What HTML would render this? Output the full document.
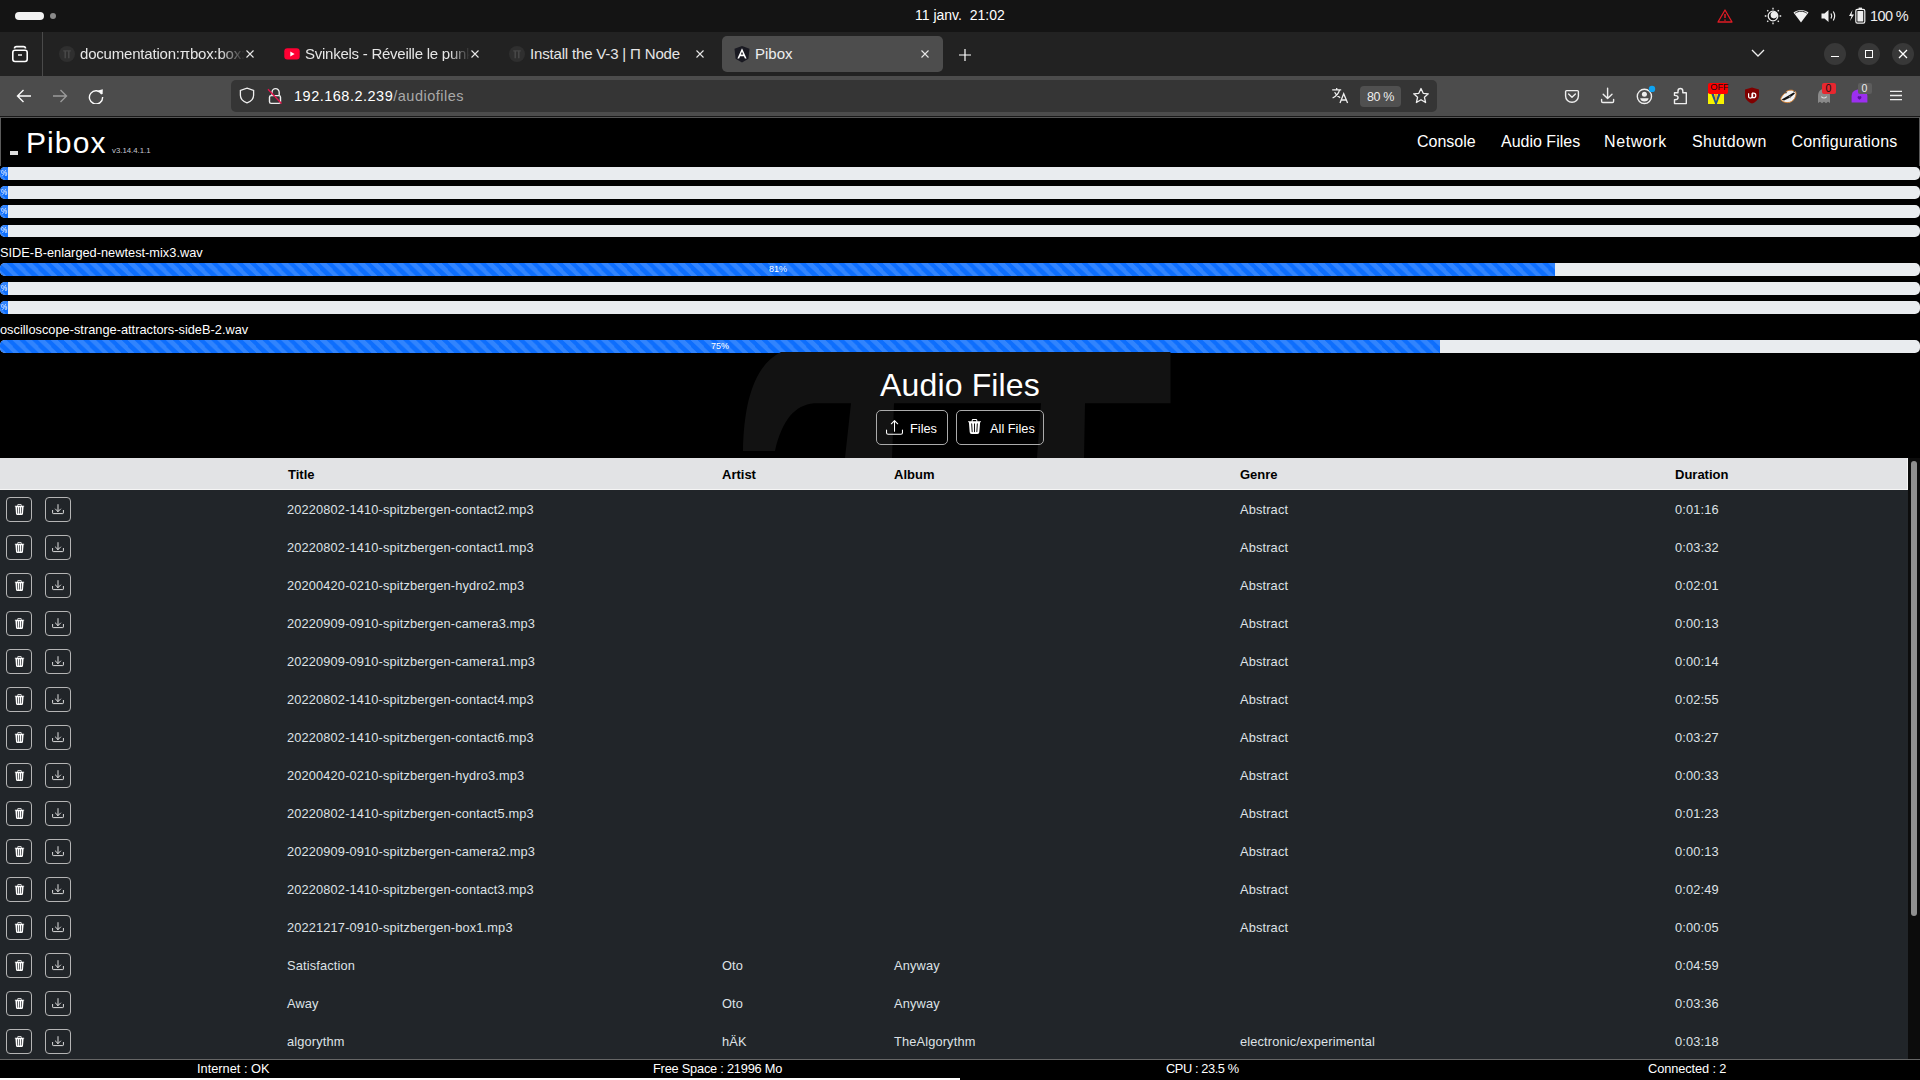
<!DOCTYPE html>
<html><head><meta charset="utf-8">
<style>
*{box-sizing:border-box}
html,body{margin:0;padding:0}
body{width:1920px;height:1080px;overflow:hidden;background:#000;position:relative;font-family:"Liberation Sans",sans-serif;color:#fff}
.a{position:absolute}
.t{position:absolute;white-space:nowrap;line-height:1}
svg{display:block}
/* progress */
.pg{position:absolute;left:0;width:1920px;height:12.8px;background:#e9ecef;border-radius:5px;overflow:hidden}
.pb{position:absolute;left:0;top:0;height:100%;background-color:#0d6efd;
 background-image:linear-gradient(45deg,rgba(255,255,255,.15) 25%,transparent 25%,transparent 50%,rgba(255,255,255,.15) 50%,rgba(255,255,255,.15) 75%,transparent 75%,transparent);
 background-size:12.8px 12.8px;overflow:hidden}
.pt{position:absolute;top:2px;font-size:9px;line-height:1;color:#fff;white-space:nowrap}
.lbl{position:absolute;left:0;font-size:12.8px;line-height:1;color:#fff;white-space:nowrap}
/* table */
.row{position:absolute;left:0;width:1908px;height:38px;background:#212529}
.btn{position:absolute;top:7px;width:26px;height:25px;border:1px solid #b5b5b5;border-radius:4px}
.cell{position:absolute;top:14px;letter-spacing:0.15px;font-size:12.8px;line-height:1;color:#dee2e6;white-space:nowrap}
.hd{position:absolute;top:10px;font-size:13px;font-weight:bold;line-height:1;color:#000;white-space:nowrap}
.ft{position:absolute;top:1062.5px;font-size:12.8px;line-height:1;color:#fff;white-space:nowrap}
</style></head>
<body>
<!-- OS top bar -->
<div class="a" style="left:0;top:0;width:1920px;height:32px;background:#141414"></div>
<div class="a" style="left:15px;top:12px;width:29px;height:8px;border-radius:4px;background:#f2f2f2"></div>
<div class="a" style="left:50px;top:13px;width:6px;height:6px;border-radius:50%;background:#8a8a8a"></div>
<div class="t" style="left:915px;top:8px;font-size:14px">11 janv.&nbsp;&nbsp;21:02</div>

<!-- tab bar -->
<div class="a" style="left:0;top:32px;width:1920px;height:44px;background:#222"></div>

<!-- toolbar -->
<div class="a" style="left:0;top:76px;width:1920px;height:40px;background:#4c4c4c"></div>
<div class="a" style="left:0;top:116px;width:1920px;height:1px;background:#181818"></div>
<div class="a" style="left:0;top:117px;width:1920px;height:1px;background:#555"></div>
<div class="a" style="left:231px;top:80px;width:1206px;height:32px;border-radius:5px;background:#353535"></div>


<!-- tab strip -->
<div class="a" style="left:42px;top:32px;width:1px;height:44px;background:#4a4a4a"></div>
<svg class="a" style="left:0;top:32px" width="42" height="44" viewBox="0 32 42 44" fill="none" stroke="#fff" stroke-width="1.6">
 <rect x="12.8" y="50.3" width="14.4" height="11.2" rx="2.2"/>
 <path d="M14.5 48.5 Q14.5 46.6 16.5 46.6 L23.5 46.6 Q25.5 46.6 25.5 48.5"/>
 <path d="M18 55 L22 55" stroke-width="1.4"/>
</svg>
<!-- tab 1 -->
<svg class="a" style="left:59px;top:46px" width="16" height="16" viewBox="0 0 16 16"><circle cx="8" cy="8" r="8" fill="#2f2f2f"/><path d="M4.2 4.2H11.8V5.6H4.2ZM5.4 4.2H7V12.2H5.4ZM9 4.2H10.6V12.2H9Z" fill="#474747"/></svg>
<div class="t" style="left:80px;top:46px;font-size:15px;color:#e6e6e6;letter-spacing:-0.2px;width:165px;overflow:hidden;-webkit-mask-image:linear-gradient(90deg,#000 140px,transparent 165px)">documentation:&#960;box:box:</div>
<svg class="a" style="left:245px;top:49px" width="10" height="10" viewBox="0 0 10 10" stroke="#e8e8e8" stroke-width="1.1"><path d="M1.5 1.5L8.5 8.5M8.5 1.5L1.5 8.5"/></svg>
<!-- tab 2 -->
<svg class="a" style="left:284px;top:48px" width="16" height="12" viewBox="0 0 16 12"><rect x="0.3" y="0.3" width="15.4" height="11.2" rx="3" fill="#ff0033"/><path d="M6.3 3.4L10.6 5.9L6.3 8.4Z" fill="#fff"/></svg>
<div class="t" style="left:305px;top:46px;font-size:15px;color:#e6e6e6;letter-spacing:-0.25px;width:165px;overflow:hidden;-webkit-mask-image:linear-gradient(90deg,#000 145px,transparent 165px)">Svinkels - R&eacute;veille le punk</div>
<svg class="a" style="left:470px;top:49px" width="10" height="10" viewBox="0 0 10 10" stroke="#e8e8e8" stroke-width="1.1"><path d="M1.5 1.5L8.5 8.5M8.5 1.5L1.5 8.5"/></svg>
<!-- tab 3 -->
<svg class="a" style="left:509px;top:46px" width="16" height="16" viewBox="0 0 16 16"><circle cx="8" cy="8" r="8" fill="#2f2f2f"/><path d="M4.2 4.2H11.8V5.6H4.2ZM5.4 4.2H7V12.2H5.4ZM9 4.2H10.6V12.2H9Z" fill="#474747"/></svg>
<div class="t" style="left:530px;top:46px;font-size:15px;color:#e6e6e6;letter-spacing:-0.17px">Install the V-3 | &#928; Node</div>
<svg class="a" style="left:695px;top:49px" width="10" height="10" viewBox="0 0 10 10" stroke="#e8e8e8" stroke-width="1.1"><path d="M1.5 1.5L8.5 8.5M8.5 1.5L1.5 8.5"/></svg>
<!-- tab 4 active -->
<div class="a" style="left:722px;top:36px;width:221px;height:36px;border-radius:5px;background:#4d4d4d"></div>
<svg class="a" style="left:734px;top:46px" width="16" height="17" viewBox="0 0 16 17"><path d="M8 0L15.5 2.7L14.4 12.8L8 16.5L1.6 12.8L0.5 2.7Z" fill="#1a1a22"/><path d="M8 2.2L3.4 12.6H5.1L6.1 10.2H9.9L10.9 12.6H12.6ZM6.8 8.6L8 5.7L9.2 8.6Z" fill="#fff"/></svg>
<div class="t" style="left:755px;top:46px;font-size:15px;color:#eee">Pibox</div>
<svg class="a" style="left:920px;top:49px" width="10" height="10" viewBox="0 0 10 10" stroke="#e8e8e8" stroke-width="1.1"><path d="M1.5 1.5L8.5 8.5M8.5 1.5L1.5 8.5"/></svg>
<svg class="a" style="left:958px;top:48px" width="14" height="14" viewBox="0 0 14 14" stroke="#fff" stroke-width="1.2"><path d="M7 1V13M1 7H13"/></svg>
<!-- window controls -->
<svg class="a" style="left:1751px;top:48px" width="14" height="10" viewBox="0 0 14 10" fill="none" stroke="#eee" stroke-width="1.3"><path d="M1 2L7 8L13 2"/></svg>
<div class="a" style="left:1824px;top:43px;width:22px;height:22px;border-radius:50%;background:#383838"></div>
<div class="a" style="left:1858px;top:43px;width:22px;height:22px;border-radius:50%;background:#383838"></div>
<div class="a" style="left:1892px;top:43px;width:22px;height:22px;border-radius:50%;background:#383838"></div>
<div class="a" style="left:1831px;top:56px;width:8px;height:1.2px;background:#fff"></div>
<div class="a" style="left:1865px;top:50px;width:8px;height:8px;border:1.3px solid #fff"></div>
<svg class="a" style="left:1898px;top:49px" width="10" height="10" viewBox="0 0 10 10" stroke="#fff" stroke-width="1.3"><path d="M1 1L9 9M9 1L1 9"/></svg>

<!-- toolbar icons -->
<svg class="a" style="left:16px;top:89px" width="16" height="14" viewBox="0 0 16 14" fill="none" stroke="#fbfbfb" stroke-width="1.4"><path d="M15 7H1.5M7.5 1L1.5 7L7.5 13"/></svg>
<svg class="a" style="left:52px;top:89px" width="16" height="14" viewBox="0 0 16 14" fill="none" stroke="#9a9a9a" stroke-width="1.4"><path d="M1 7H14.5M8.5 1L14.5 7L8.5 13"/></svg>
<svg class="a" style="left:88px;top:88px" width="16" height="16" viewBox="0 0 16 16" fill="none" stroke="#fbfbfb" stroke-width="1.4"><path d="M13.8 6.2A6.6 6.6 0 1 0 14.6 9"/><path d="M10 2.5L14.8 1.2L14.6 6.3Z" fill="#fbfbfb" stroke="none"/></svg>
<!-- url bar content -->
<svg class="a" style="left:239px;top:87px" width="16" height="17" viewBox="0 0 16 17" fill="none" stroke="#eee" stroke-width="1.3"><path d="M8 1.2L14.6 3.4V8.2C14.6 12 11.5 14.6 8 15.9C4.5 14.6 1.4 12 1.4 8.2V3.4Z"/></svg>
<svg class="a" style="left:267px;top:87px" width="17" height="18" viewBox="0 0 17 18" fill="none"><path d="M5 8V5.2A3.6 3.6 0 0 1 12.2 5.2V8" stroke="#eee" stroke-width="1.4"/><rect x="2.5" y="8.6" width="11" height="7.8" rx="1.6" stroke="#eee" stroke-width="1.4"/><path d="M1 2.2L14.5 16.6" stroke="#e3124b" stroke-width="1.4"/></svg>
<div class="t" style="left:294px;top:89px;font-size:14.5px;color:#fff;letter-spacing:0.5px">192.168.2.239<span style="color:#a9a9a9">/audiofiles</span></div>
<svg class="a" style="left:1331px;top:87px" width="18" height="17" viewBox="0 0 18 17" fill="none" stroke="#eee" stroke-width="1.3"><path d="M1.2 2.8H10.2M5.7 1V2.8M8.6 2.8C7.6 6.5 5 9.2 1.6 11M3.6 5.2C5 8 7 9.6 9.2 10.6"/><path d="M9 16L12.7 6.8L16.6 16M10.3 13H15.2"/></svg>
<div class="a" style="left:1360px;top:86px;width:41px;height:21px;border-radius:4px;background:#505050"></div>
<div class="t" style="left:1367px;top:91px;font-size:12.5px;color:#eee;letter-spacing:-0.35px">80 %</div>
<svg class="a" style="left:1412px;top:87px" width="18" height="18" viewBox="0 0 18 18" fill="none" stroke="#eee" stroke-width="1.3" stroke-linejoin="round"><path d="M9 1.5L11.2 6.3L16.3 6.8L12.4 10.2L13.6 15.5L9 12.7L4.4 15.5L5.6 10.2L1.7 6.8L6.8 6.3Z"/></svg>
<!-- right toolbar icons -->
<svg class="a" style="left:1562px;top:87px" width="20" height="18" viewBox="1562 87 20 18" fill="none" stroke="#eee" stroke-width="1.4" stroke-linejoin="round" stroke-linecap="round"><path d="M1566.6 90.6H1577.4A1 1 0 0 1 1578.4 91.6V95.9A6.4 6.4 0 0 1 1565.6 95.9V91.6A1 1 0 0 1 1566.6 90.6Z"/><path d="M1568.6 93.9L1572 97.2L1575.4 93.9"/></svg>
<svg class="a" style="left:1598px;top:86px" width="20" height="19" viewBox="1598 86 20 19" fill="none" stroke="#eee" stroke-width="1.4" stroke-linejoin="round" stroke-linecap="round"><path d="M1607.6 88.3V98.4M1603.2 94.2L1607.6 98.6L1612 94.2"/><path d="M1601.6 99.5V101.3A1.2 1.2 0 0 0 1602.8 102.5H1612.4A1.2 1.2 0 0 0 1613.6 101.3V99.5"/></svg>
<svg class="a" style="left:1634px;top:82px" width="24" height="24" viewBox="1634 82 24 24" fill="none"><circle cx="1644.4" cy="96.4" r="7.1" stroke="#eee" stroke-width="1.4"/><circle cx="1644.4" cy="94.3" r="2.5" fill="#eee"/><path d="M1640.2 98.3H1648.6Q1648 101.6 1644.4 101.6Q1640.8 101.6 1640.2 98.3Z" fill="#eee"/><circle cx="1652" cy="88.9" r="3.2" fill="#0fa3f1"/></svg>
<svg class="a" style="left:1672px;top:86px" width="18" height="20" viewBox="1672 86 18 20" fill="none" stroke="#eee" stroke-width="1.4" stroke-linejoin="round"><path d="M1674.5 103.6L1674.5 99.8C1676.6 99.8 1678.1 98.9 1678.1 97.6C1678.1 96.3 1676.6 95.4 1674.5 95.4L1674.5 92.8L1678 92.8L1678 91C1678 89.6 1679.1 88.5 1680.4 88.5C1681.7 88.5 1682.8 89.6 1682.8 91L1682.8 92.8L1686.3 92.8L1686.3 103.6Z"/></svg>
<svg class="a" style="left:1706px;top:82px" width="24" height="24" viewBox="1706 82 24 24"><rect x="1708" y="93" width="16" height="11" fill="#f8f200"/><path d="M1711 93H1713.6L1716 101.2L1718.4 93H1721L1716.8 104H1715.2Z" fill="#1f4e8c"/><path d="M1715.4 93.5H1716.6V99.5H1715.4Z" fill="#e8742a"/><rect x="1708" y="83" width="20" height="11" rx="2" fill="#f00"/></svg>
<div class="t" style="left:1710.3px;top:82.4px;font-size:9.4px;color:#111;letter-spacing:-0.2px">OFF</div>
<svg class="a" style="left:1744px;top:87px" width="16" height="17" viewBox="0 0 16 17"><path d="M8 0.4L15 2.6V8.5C15 12.3 12 14.9 8 16.6C4 14.9 1 12.3 1 8.5V2.6Z" fill="#800000"/><path d="M4.6 6.2V9.4A1.7 1.7 0 0 0 8 9.4V6.2" fill="none" stroke="#fff" stroke-width="1.2"/><path d="M8.6 6.2H9.6A2.2 2.2 0 0 1 9.6 10.6H8.6Z" fill="none" stroke="#fff" stroke-width="1.2"/></svg>
<svg class="a" style="left:1778px;top:86px" width="20" height="19" viewBox="1778 86 20 19"><path d="M1781 99.8C1780.2 98.6 1782 96 1784 94C1785.6 92.2 1787.2 90.4 1789.8 90.2C1792 90 1794.4 90.4 1795.6 91.8C1796.6 93.4 1795.8 96.2 1794.6 98.4C1793.2 100.8 1790.6 102.6 1787.4 102.6C1784.6 102.6 1782 101.4 1781 99.8Z" fill="#f2f2f2" stroke="#d9802e" stroke-width="0.9"/><path d="M1781.6 99.6L1789 95.2L1793.6 92.4L1795 93.6L1790.2 97.4L1784 100.6Z" fill="#111"/><path d="M1788.6 96.4L1790.6 95.4L1790.4 98.4Z" fill="#777"/><path d="M1784.6 93.6L1786 91.8L1787.2 93Z M1793 90.8L1795 90.6L1794.4 92.4Z" fill="#333"/></svg>
<svg class="a" style="left:1816px;top:88px" width="16" height="17" viewBox="0 0 16 17"><path d="M8 1C4 1 2 4 2 8V15L4 13.8L6 15.2L8 13.8L10 15.2L12 13.8L14 15V8C14 4 12 1 8 1Z" fill="#8a8a8a"/><path d="M5.3 8.6Q8 11.4 10.7 8.6" fill="none" stroke="#ddd" stroke-width="1.1"/></svg>
<div class="a" style="left:1822px;top:83px;width:14px;height:11px;border-radius:2px;background:#e8272f"></div>
<div class="t" style="left:1825.5px;top:82.5px;font-size:10.5px;color:#111">0</div>
<svg class="a" style="left:1851px;top:89px" width="17" height="14" viewBox="0 0 17 14"><path d="M8.5 0.5C3.5 0.5 0.6 3 0.6 7.5V13.5H16.4V7.5C16.4 3 13.5 0.5 8.5 0.5Z" fill="#9c2ff0"/><path d="M6.5 8.3A1.2 1.2 0 0 1 8.5 7.4A1.2 1.2 0 0 1 10.5 8.3Q10.5 9.6 8.5 10.8Q6.5 9.6 6.5 8.3Z" fill="#5c0e9e"/></svg>
<div class="a" style="left:1858px;top:83px;width:14px;height:11px;border-radius:2px;background:#5d5d5d"></div>
<div class="t" style="left:1861.5px;top:82.5px;font-size:10.5px;color:#eee">0</div>
<svg class="a" style="left:1889px;top:90px" width="14" height="11" viewBox="0 0 14 11" stroke="#eee" stroke-width="1.3"><path d="M1 1.3H13M1 5.5H13M1 9.7H13"/></svg>

<!-- OS tray -->
<svg class="a" style="left:1717px;top:9px" width="16" height="14" viewBox="0 0 16 14" fill="none"><path d="M8 1L15 13H1Z" stroke="#e01b24" stroke-width="1.3" stroke-linejoin="round"/><path d="M8 5V9M8 10.6V11.8" stroke="#e01b24" stroke-width="1.5"/></svg>
<svg class="a" style="left:1764px;top:7px" width="18" height="18" viewBox="0 0 18 18" fill="none" stroke="#eee" stroke-width="1.3"><circle cx="9" cy="9" r="4.8"/><path d="M9 0.8V2.4M9 15.6V17.2M0.8 9H2.4M15.6 9H17.2M3.2 3.2L4.3 4.3M13.7 13.7L14.8 14.8M3.2 14.8L4.3 13.7M13.7 4.3L14.8 3.2"/><circle cx="9.9" cy="8.1" r="3.3" fill="#eee" stroke="none"/></svg>
<svg class="a" style="left:1793px;top:9px" width="16" height="14" viewBox="0 0 16 14"><path d="M8 13.5L0.5 3.5C4.5 0 11.5 0 15.5 3.5Z" fill="#f2f2f2"/><path d="M2.2 4.2C5.6 1.6 10.4 1.6 13.8 4.2" fill="none" stroke="#141414" stroke-width="0.9"/></svg>
<svg class="a" style="left:1821px;top:9px" width="16" height="14" viewBox="0 0 16 14"><path d="M0.5 4.5H3.5L7.5 1V13L3.5 9.5H0.5Z" fill="#eee"/><path d="M10 4.5Q11.5 7 10 9.5M12.3 2.5Q15 7 12.3 11.5" fill="none" stroke="#eee" stroke-width="1.2"/></svg>
<svg class="a" style="left:1848px;top:7px" width="18" height="17" viewBox="0 0 18 17"><path d="M4.5 3L1 9H3.5L2 14L6 7.5H3.5Z" fill="#eee"/><rect x="7.8" y="2.4" width="9" height="13.8" rx="1.6" fill="none" stroke="#eee" stroke-width="1.2"/><rect x="10.6" y="0.6" width="3.4" height="1.8" fill="#eee"/><rect x="9.4" y="4" width="5.8" height="10.6" rx="0.6" fill="#eee"/></svg>
<div class="t" style="left:1870px;top:9px;font-size:14.5px;color:#eee;letter-spacing:-0.6px">100 %</div>

<!-- page navbar -->
<div class="a" style="left:0;top:117px;width:1px;height:49px;background:#5a5a5a"></div>
<div class="a" style="left:1919px;top:117px;width:1px;height:49px;background:#5a5a5a"></div>
<div class="a" style="left:10px;top:151px;width:8px;height:4px;background:#ddd"></div>
<div class="t" style="left:26px;top:128px;font-size:30px;letter-spacing:1.1px;-webkit-text-stroke:0.9px #000;paint-order:stroke fill">Pibox</div>
<div class="t" style="left:112px;top:146.5px;font-size:7.8px;color:#c4c6d0">v3.14.4.1.1</div>
<div class="t" style="left:1417px;top:134px;font-size:16px">Console</div>
<div class="t" style="left:1501px;top:134px;font-size:16px">Audio Files</div>
<div class="t" style="left:1604px;top:134px;font-size:16px;letter-spacing:0.6px">Network</div>
<div class="t" style="left:1692px;top:134px;font-size:16px;letter-spacing:0.45px">Shutdown</div>
<div class="t" style="left:1791.5px;top:134px;font-size:16px;letter-spacing:0.2px">Configurations</div>

<!-- progress bars -->
<div class="pg" style="top:167px"><div class="pb" style="width:8px"><span class="pt" style="left:0.6px;top:2.6px;font-size:8.2px;transform:scaleX(0.86);transform-origin:0 0">%</span></div></div>
<div class="pg" style="top:186.2px"><div class="pb" style="width:8px"><span class="pt" style="left:0.6px;top:2.6px;font-size:8.2px;transform:scaleX(0.86);transform-origin:0 0">%</span></div></div>
<div class="pg" style="top:205.4px"><div class="pb" style="width:8px"><span class="pt" style="left:0.6px;top:2.6px;font-size:8.2px;transform:scaleX(0.86);transform-origin:0 0">%</span></div></div>
<div class="pg" style="top:224.6px"><div class="pb" style="width:8px"><span class="pt" style="left:0.6px;top:2.6px;font-size:8.2px;transform:scaleX(0.86);transform-origin:0 0">%</span></div></div>
<div class="lbl" style="top:247px">SIDE-B-enlarged-newtest-mix3.wav</div>
<div class="pg" style="top:263px"><div class="pb" style="width:1555px"><span class="pt" style="left:769px">81%</span></div></div>
<div class="pg" style="top:282.2px"><div class="pb" style="width:8px"><span class="pt" style="left:0.6px;top:2.6px;font-size:8.2px;transform:scaleX(0.86);transform-origin:0 0">%</span></div></div>
<div class="pg" style="top:301.4px"><div class="pb" style="width:8px"><span class="pt" style="left:0.6px;top:2.6px;font-size:8.2px;transform:scaleX(0.86);transform-origin:0 0">%</span></div></div>
<div class="lbl" style="top:324px">oscilloscope-strange-attractors-sideB-2.wav</div>
<div class="pg" style="top:339.8px"><div class="pb" style="width:1440px"><span class="pt" style="left:711px">75%</span></div></div>

<!-- audio files header -->
<svg class="a" style="left:0;top:352px" width="1920" height="106" viewBox="0 352 1920 106">
<path fill="#121212" d="M781 352 L1170.5 352 L1170.5 403.3 L1085 403.3 L1084 458 L1037 458 L1041 403.3 L894 403.3 L892 458 L845 458 L851 403.3 L814 403.3 C795 405 782 420 775 451 L743 451 C744 400 755 365 781 352 Z"/>
</svg>
<div class="t" style="left:880px;top:368.5px;font-size:32px;letter-spacing:0.15px">Audio Files</div>
<div class="a" style="left:876px;top:410px;width:72px;height:35px;border:1px solid #aaa;border-radius:5px"></div>
<svg class="a" style="left:886px;top:419px" width="17" height="17" viewBox="0 0 16 16" fill="#fff"><path d="M.5 9.9a.5.5 0 0 1 .5.5v2.5a1 1 0 0 0 1 1h12a1 1 0 0 0 1-1v-2.5a.5.5 0 0 1 1 0v2.5a2 2 0 0 1-2 2H2a2 2 0 0 1-2-2v-2.5a.5.5 0 0 1 .5-.5"/><path d="M7.646 1.146a.5.5 0 0 1 .708 0l3 3a.5.5 0 0 1-.708.708L8.5 2.707V11.5a.5.5 0 0 1-1 0V2.707L5.354 4.854a.5.5 0 1 1-.708-.708z"/></svg>
<div class="t" style="left:910px;top:423px;font-size:12.8px">Files</div>
<div class="a" style="left:956px;top:410px;width:88px;height:35px;border:1px solid #aaa;border-radius:5px"></div>
<svg class="a" style="left:967px;top:419px" width="15" height="15" viewBox="0 0 16 16" fill="#fff"><path d="M11 1.5v1h3.5a.5.5 0 0 1 0 1h-.538l-.853 10.66A2 2 0 0 1 11.115 16h-6.23a2 2 0 0 1-1.994-1.84L2.038 3.5H1.5a.5.5 0 0 1 0-1H5v-1A1.5 1.5 0 0 1 6.5 0h3A1.5 1.5 0 0 1 11 1.5m-5 0v1h4v-1a.5.5 0 0 0-.5-.5h-3a.5.5 0 0 0-.5.5M4.5 5.029l.5 8.5a.5.5 0 1 0 .998-.06l-.5-8.5a.5.5 0 1 0-.998.06m6.53-.528a.5.5 0 0 0-.528.47l-.5 8.5a.5.5 0 0 0 .998.058l.5-8.5a.5.5 0 0 0-.47-.528M8 4.5a.5.5 0 0 0-.5.5v8.5a.5.5 0 0 0 1 0V5a.5.5 0 0 0-.5-.5"/></svg>
<div class="t" style="left:990px;top:423px;font-size:12.8px">All Files</div>

<!-- table -->
<div class="a" style="left:0;top:458px;width:1908px;height:32px;background:#e2e3e5;border-bottom:1px solid #f5f5f5;border-right:1px solid #f5f5f5">
 <span class="hd" style="left:288px">Title</span>
 <span class="hd" style="left:722px">Artist</span>
 <span class="hd" style="left:894px">Album</span>
 <span class="hd" style="left:1240px">Genre</span>
 <span class="hd" style="left:1675px">Duration</span>
</div>
<div class="row" style="top:490px"><div class="btn" style="left:6px"><svg class="a" style="left:7px;top:6px" width="11" height="11" viewBox="0 0 16 16" fill="#fff"><path d="M11 1.5v1h3.5a.5.5 0 0 1 0 1h-.538l-.853 10.66A2 2 0 0 1 11.115 16h-6.23a2 2 0 0 1-1.994-1.84L2.038 3.5H1.5a.5.5 0 0 1 0-1H5v-1A1.5 1.5 0 0 1 6.5 0h3A1.5 1.5 0 0 1 11 1.5m-5 0v1h4v-1a.5.5 0 0 0-.5-.5h-3a.5.5 0 0 0-.5.5M4.5 5.029l.5 8.5a.5.5 0 1 0 .998-.06l-.5-8.5a.5.5 0 1 0-.998.06m6.53-.528a.5.5 0 0 0-.528.47l-.5 8.5a.5.5 0 0 0 .998.058l.5-8.5a.5.5 0 0 0-.47-.528M8 4.5a.5.5 0 0 0-.5.5v8.5a.5.5 0 0 0 1 0V5a.5.5 0 0 0-.5-.5"/></svg></div><div class="btn" style="left:45px"><svg class="a" style="left:6px;top:6px" width="12" height="11" viewBox="0 0 12 11" fill="none" stroke="#e6e6e6" stroke-width="0.95" stroke-linecap="round" stroke-linejoin="round"><path d="M6 0.6V7.6M3.4 5L6 7.6L8.6 5"/><path d="M0.6 6.4V8.9Q0.6 9.6 1.3 9.6H10.7Q11.4 9.6 11.4 8.9V6.4"/></svg></div><span class="cell" style="left:287px">20220802-1410-spitzbergen-contact2.mp3</span><span class="cell" style="left:1240px">Abstract</span><span class="cell" style="left:1675px">0:01:16</span></div>
<div class="row" style="top:528px"><div class="btn" style="left:6px"><svg class="a" style="left:7px;top:6px" width="11" height="11" viewBox="0 0 16 16" fill="#fff"><path d="M11 1.5v1h3.5a.5.5 0 0 1 0 1h-.538l-.853 10.66A2 2 0 0 1 11.115 16h-6.23a2 2 0 0 1-1.994-1.84L2.038 3.5H1.5a.5.5 0 0 1 0-1H5v-1A1.5 1.5 0 0 1 6.5 0h3A1.5 1.5 0 0 1 11 1.5m-5 0v1h4v-1a.5.5 0 0 0-.5-.5h-3a.5.5 0 0 0-.5.5M4.5 5.029l.5 8.5a.5.5 0 1 0 .998-.06l-.5-8.5a.5.5 0 1 0-.998.06m6.53-.528a.5.5 0 0 0-.528.47l-.5 8.5a.5.5 0 0 0 .998.058l.5-8.5a.5.5 0 0 0-.47-.528M8 4.5a.5.5 0 0 0-.5.5v8.5a.5.5 0 0 0 1 0V5a.5.5 0 0 0-.5-.5"/></svg></div><div class="btn" style="left:45px"><svg class="a" style="left:6px;top:6px" width="12" height="11" viewBox="0 0 12 11" fill="none" stroke="#e6e6e6" stroke-width="0.95" stroke-linecap="round" stroke-linejoin="round"><path d="M6 0.6V7.6M3.4 5L6 7.6L8.6 5"/><path d="M0.6 6.4V8.9Q0.6 9.6 1.3 9.6H10.7Q11.4 9.6 11.4 8.9V6.4"/></svg></div><span class="cell" style="left:287px">20220802-1410-spitzbergen-contact1.mp3</span><span class="cell" style="left:1240px">Abstract</span><span class="cell" style="left:1675px">0:03:32</span></div>
<div class="row" style="top:566px"><div class="btn" style="left:6px"><svg class="a" style="left:7px;top:6px" width="11" height="11" viewBox="0 0 16 16" fill="#fff"><path d="M11 1.5v1h3.5a.5.5 0 0 1 0 1h-.538l-.853 10.66A2 2 0 0 1 11.115 16h-6.23a2 2 0 0 1-1.994-1.84L2.038 3.5H1.5a.5.5 0 0 1 0-1H5v-1A1.5 1.5 0 0 1 6.5 0h3A1.5 1.5 0 0 1 11 1.5m-5 0v1h4v-1a.5.5 0 0 0-.5-.5h-3a.5.5 0 0 0-.5.5M4.5 5.029l.5 8.5a.5.5 0 1 0 .998-.06l-.5-8.5a.5.5 0 1 0-.998.06m6.53-.528a.5.5 0 0 0-.528.47l-.5 8.5a.5.5 0 0 0 .998.058l.5-8.5a.5.5 0 0 0-.47-.528M8 4.5a.5.5 0 0 0-.5.5v8.5a.5.5 0 0 0 1 0V5a.5.5 0 0 0-.5-.5"/></svg></div><div class="btn" style="left:45px"><svg class="a" style="left:6px;top:6px" width="12" height="11" viewBox="0 0 12 11" fill="none" stroke="#e6e6e6" stroke-width="0.95" stroke-linecap="round" stroke-linejoin="round"><path d="M6 0.6V7.6M3.4 5L6 7.6L8.6 5"/><path d="M0.6 6.4V8.9Q0.6 9.6 1.3 9.6H10.7Q11.4 9.6 11.4 8.9V6.4"/></svg></div><span class="cell" style="left:287px">20200420-0210-spitzbergen-hydro2.mp3</span><span class="cell" style="left:1240px">Abstract</span><span class="cell" style="left:1675px">0:02:01</span></div>
<div class="row" style="top:604px"><div class="btn" style="left:6px"><svg class="a" style="left:7px;top:6px" width="11" height="11" viewBox="0 0 16 16" fill="#fff"><path d="M11 1.5v1h3.5a.5.5 0 0 1 0 1h-.538l-.853 10.66A2 2 0 0 1 11.115 16h-6.23a2 2 0 0 1-1.994-1.84L2.038 3.5H1.5a.5.5 0 0 1 0-1H5v-1A1.5 1.5 0 0 1 6.5 0h3A1.5 1.5 0 0 1 11 1.5m-5 0v1h4v-1a.5.5 0 0 0-.5-.5h-3a.5.5 0 0 0-.5.5M4.5 5.029l.5 8.5a.5.5 0 1 0 .998-.06l-.5-8.5a.5.5 0 1 0-.998.06m6.53-.528a.5.5 0 0 0-.528.47l-.5 8.5a.5.5 0 0 0 .998.058l.5-8.5a.5.5 0 0 0-.47-.528M8 4.5a.5.5 0 0 0-.5.5v8.5a.5.5 0 0 0 1 0V5a.5.5 0 0 0-.5-.5"/></svg></div><div class="btn" style="left:45px"><svg class="a" style="left:6px;top:6px" width="12" height="11" viewBox="0 0 12 11" fill="none" stroke="#e6e6e6" stroke-width="0.95" stroke-linecap="round" stroke-linejoin="round"><path d="M6 0.6V7.6M3.4 5L6 7.6L8.6 5"/><path d="M0.6 6.4V8.9Q0.6 9.6 1.3 9.6H10.7Q11.4 9.6 11.4 8.9V6.4"/></svg></div><span class="cell" style="left:287px">20220909-0910-spitzbergen-camera3.mp3</span><span class="cell" style="left:1240px">Abstract</span><span class="cell" style="left:1675px">0:00:13</span></div>
<div class="row" style="top:642px"><div class="btn" style="left:6px"><svg class="a" style="left:7px;top:6px" width="11" height="11" viewBox="0 0 16 16" fill="#fff"><path d="M11 1.5v1h3.5a.5.5 0 0 1 0 1h-.538l-.853 10.66A2 2 0 0 1 11.115 16h-6.23a2 2 0 0 1-1.994-1.84L2.038 3.5H1.5a.5.5 0 0 1 0-1H5v-1A1.5 1.5 0 0 1 6.5 0h3A1.5 1.5 0 0 1 11 1.5m-5 0v1h4v-1a.5.5 0 0 0-.5-.5h-3a.5.5 0 0 0-.5.5M4.5 5.029l.5 8.5a.5.5 0 1 0 .998-.06l-.5-8.5a.5.5 0 1 0-.998.06m6.53-.528a.5.5 0 0 0-.528.47l-.5 8.5a.5.5 0 0 0 .998.058l.5-8.5a.5.5 0 0 0-.47-.528M8 4.5a.5.5 0 0 0-.5.5v8.5a.5.5 0 0 0 1 0V5a.5.5 0 0 0-.5-.5"/></svg></div><div class="btn" style="left:45px"><svg class="a" style="left:6px;top:6px" width="12" height="11" viewBox="0 0 12 11" fill="none" stroke="#e6e6e6" stroke-width="0.95" stroke-linecap="round" stroke-linejoin="round"><path d="M6 0.6V7.6M3.4 5L6 7.6L8.6 5"/><path d="M0.6 6.4V8.9Q0.6 9.6 1.3 9.6H10.7Q11.4 9.6 11.4 8.9V6.4"/></svg></div><span class="cell" style="left:287px">20220909-0910-spitzbergen-camera1.mp3</span><span class="cell" style="left:1240px">Abstract</span><span class="cell" style="left:1675px">0:00:14</span></div>
<div class="row" style="top:680px"><div class="btn" style="left:6px"><svg class="a" style="left:7px;top:6px" width="11" height="11" viewBox="0 0 16 16" fill="#fff"><path d="M11 1.5v1h3.5a.5.5 0 0 1 0 1h-.538l-.853 10.66A2 2 0 0 1 11.115 16h-6.23a2 2 0 0 1-1.994-1.84L2.038 3.5H1.5a.5.5 0 0 1 0-1H5v-1A1.5 1.5 0 0 1 6.5 0h3A1.5 1.5 0 0 1 11 1.5m-5 0v1h4v-1a.5.5 0 0 0-.5-.5h-3a.5.5 0 0 0-.5.5M4.5 5.029l.5 8.5a.5.5 0 1 0 .998-.06l-.5-8.5a.5.5 0 1 0-.998.06m6.53-.528a.5.5 0 0 0-.528.47l-.5 8.5a.5.5 0 0 0 .998.058l.5-8.5a.5.5 0 0 0-.47-.528M8 4.5a.5.5 0 0 0-.5.5v8.5a.5.5 0 0 0 1 0V5a.5.5 0 0 0-.5-.5"/></svg></div><div class="btn" style="left:45px"><svg class="a" style="left:6px;top:6px" width="12" height="11" viewBox="0 0 12 11" fill="none" stroke="#e6e6e6" stroke-width="0.95" stroke-linecap="round" stroke-linejoin="round"><path d="M6 0.6V7.6M3.4 5L6 7.6L8.6 5"/><path d="M0.6 6.4V8.9Q0.6 9.6 1.3 9.6H10.7Q11.4 9.6 11.4 8.9V6.4"/></svg></div><span class="cell" style="left:287px">20220802-1410-spitzbergen-contact4.mp3</span><span class="cell" style="left:1240px">Abstract</span><span class="cell" style="left:1675px">0:02:55</span></div>
<div class="row" style="top:718px"><div class="btn" style="left:6px"><svg class="a" style="left:7px;top:6px" width="11" height="11" viewBox="0 0 16 16" fill="#fff"><path d="M11 1.5v1h3.5a.5.5 0 0 1 0 1h-.538l-.853 10.66A2 2 0 0 1 11.115 16h-6.23a2 2 0 0 1-1.994-1.84L2.038 3.5H1.5a.5.5 0 0 1 0-1H5v-1A1.5 1.5 0 0 1 6.5 0h3A1.5 1.5 0 0 1 11 1.5m-5 0v1h4v-1a.5.5 0 0 0-.5-.5h-3a.5.5 0 0 0-.5.5M4.5 5.029l.5 8.5a.5.5 0 1 0 .998-.06l-.5-8.5a.5.5 0 1 0-.998.06m6.53-.528a.5.5 0 0 0-.528.47l-.5 8.5a.5.5 0 0 0 .998.058l.5-8.5a.5.5 0 0 0-.47-.528M8 4.5a.5.5 0 0 0-.5.5v8.5a.5.5 0 0 0 1 0V5a.5.5 0 0 0-.5-.5"/></svg></div><div class="btn" style="left:45px"><svg class="a" style="left:6px;top:6px" width="12" height="11" viewBox="0 0 12 11" fill="none" stroke="#e6e6e6" stroke-width="0.95" stroke-linecap="round" stroke-linejoin="round"><path d="M6 0.6V7.6M3.4 5L6 7.6L8.6 5"/><path d="M0.6 6.4V8.9Q0.6 9.6 1.3 9.6H10.7Q11.4 9.6 11.4 8.9V6.4"/></svg></div><span class="cell" style="left:287px">20220802-1410-spitzbergen-contact6.mp3</span><span class="cell" style="left:1240px">Abstract</span><span class="cell" style="left:1675px">0:03:27</span></div>
<div class="row" style="top:756px"><div class="btn" style="left:6px"><svg class="a" style="left:7px;top:6px" width="11" height="11" viewBox="0 0 16 16" fill="#fff"><path d="M11 1.5v1h3.5a.5.5 0 0 1 0 1h-.538l-.853 10.66A2 2 0 0 1 11.115 16h-6.23a2 2 0 0 1-1.994-1.84L2.038 3.5H1.5a.5.5 0 0 1 0-1H5v-1A1.5 1.5 0 0 1 6.5 0h3A1.5 1.5 0 0 1 11 1.5m-5 0v1h4v-1a.5.5 0 0 0-.5-.5h-3a.5.5 0 0 0-.5.5M4.5 5.029l.5 8.5a.5.5 0 1 0 .998-.06l-.5-8.5a.5.5 0 1 0-.998.06m6.53-.528a.5.5 0 0 0-.528.47l-.5 8.5a.5.5 0 0 0 .998.058l.5-8.5a.5.5 0 0 0-.47-.528M8 4.5a.5.5 0 0 0-.5.5v8.5a.5.5 0 0 0 1 0V5a.5.5 0 0 0-.5-.5"/></svg></div><div class="btn" style="left:45px"><svg class="a" style="left:6px;top:6px" width="12" height="11" viewBox="0 0 12 11" fill="none" stroke="#e6e6e6" stroke-width="0.95" stroke-linecap="round" stroke-linejoin="round"><path d="M6 0.6V7.6M3.4 5L6 7.6L8.6 5"/><path d="M0.6 6.4V8.9Q0.6 9.6 1.3 9.6H10.7Q11.4 9.6 11.4 8.9V6.4"/></svg></div><span class="cell" style="left:287px">20200420-0210-spitzbergen-hydro3.mp3</span><span class="cell" style="left:1240px">Abstract</span><span class="cell" style="left:1675px">0:00:33</span></div>
<div class="row" style="top:794px"><div class="btn" style="left:6px"><svg class="a" style="left:7px;top:6px" width="11" height="11" viewBox="0 0 16 16" fill="#fff"><path d="M11 1.5v1h3.5a.5.5 0 0 1 0 1h-.538l-.853 10.66A2 2 0 0 1 11.115 16h-6.23a2 2 0 0 1-1.994-1.84L2.038 3.5H1.5a.5.5 0 0 1 0-1H5v-1A1.5 1.5 0 0 1 6.5 0h3A1.5 1.5 0 0 1 11 1.5m-5 0v1h4v-1a.5.5 0 0 0-.5-.5h-3a.5.5 0 0 0-.5.5M4.5 5.029l.5 8.5a.5.5 0 1 0 .998-.06l-.5-8.5a.5.5 0 1 0-.998.06m6.53-.528a.5.5 0 0 0-.528.47l-.5 8.5a.5.5 0 0 0 .998.058l.5-8.5a.5.5 0 0 0-.47-.528M8 4.5a.5.5 0 0 0-.5.5v8.5a.5.5 0 0 0 1 0V5a.5.5 0 0 0-.5-.5"/></svg></div><div class="btn" style="left:45px"><svg class="a" style="left:6px;top:6px" width="12" height="11" viewBox="0 0 12 11" fill="none" stroke="#e6e6e6" stroke-width="0.95" stroke-linecap="round" stroke-linejoin="round"><path d="M6 0.6V7.6M3.4 5L6 7.6L8.6 5"/><path d="M0.6 6.4V8.9Q0.6 9.6 1.3 9.6H10.7Q11.4 9.6 11.4 8.9V6.4"/></svg></div><span class="cell" style="left:287px">20220802-1410-spitzbergen-contact5.mp3</span><span class="cell" style="left:1240px">Abstract</span><span class="cell" style="left:1675px">0:01:23</span></div>
<div class="row" style="top:832px"><div class="btn" style="left:6px"><svg class="a" style="left:7px;top:6px" width="11" height="11" viewBox="0 0 16 16" fill="#fff"><path d="M11 1.5v1h3.5a.5.5 0 0 1 0 1h-.538l-.853 10.66A2 2 0 0 1 11.115 16h-6.23a2 2 0 0 1-1.994-1.84L2.038 3.5H1.5a.5.5 0 0 1 0-1H5v-1A1.5 1.5 0 0 1 6.5 0h3A1.5 1.5 0 0 1 11 1.5m-5 0v1h4v-1a.5.5 0 0 0-.5-.5h-3a.5.5 0 0 0-.5.5M4.5 5.029l.5 8.5a.5.5 0 1 0 .998-.06l-.5-8.5a.5.5 0 1 0-.998.06m6.53-.528a.5.5 0 0 0-.528.47l-.5 8.5a.5.5 0 0 0 .998.058l.5-8.5a.5.5 0 0 0-.47-.528M8 4.5a.5.5 0 0 0-.5.5v8.5a.5.5 0 0 0 1 0V5a.5.5 0 0 0-.5-.5"/></svg></div><div class="btn" style="left:45px"><svg class="a" style="left:6px;top:6px" width="12" height="11" viewBox="0 0 12 11" fill="none" stroke="#e6e6e6" stroke-width="0.95" stroke-linecap="round" stroke-linejoin="round"><path d="M6 0.6V7.6M3.4 5L6 7.6L8.6 5"/><path d="M0.6 6.4V8.9Q0.6 9.6 1.3 9.6H10.7Q11.4 9.6 11.4 8.9V6.4"/></svg></div><span class="cell" style="left:287px">20220909-0910-spitzbergen-camera2.mp3</span><span class="cell" style="left:1240px">Abstract</span><span class="cell" style="left:1675px">0:00:13</span></div>
<div class="row" style="top:870px"><div class="btn" style="left:6px"><svg class="a" style="left:7px;top:6px" width="11" height="11" viewBox="0 0 16 16" fill="#fff"><path d="M11 1.5v1h3.5a.5.5 0 0 1 0 1h-.538l-.853 10.66A2 2 0 0 1 11.115 16h-6.23a2 2 0 0 1-1.994-1.84L2.038 3.5H1.5a.5.5 0 0 1 0-1H5v-1A1.5 1.5 0 0 1 6.5 0h3A1.5 1.5 0 0 1 11 1.5m-5 0v1h4v-1a.5.5 0 0 0-.5-.5h-3a.5.5 0 0 0-.5.5M4.5 5.029l.5 8.5a.5.5 0 1 0 .998-.06l-.5-8.5a.5.5 0 1 0-.998.06m6.53-.528a.5.5 0 0 0-.528.47l-.5 8.5a.5.5 0 0 0 .998.058l.5-8.5a.5.5 0 0 0-.47-.528M8 4.5a.5.5 0 0 0-.5.5v8.5a.5.5 0 0 0 1 0V5a.5.5 0 0 0-.5-.5"/></svg></div><div class="btn" style="left:45px"><svg class="a" style="left:6px;top:6px" width="12" height="11" viewBox="0 0 12 11" fill="none" stroke="#e6e6e6" stroke-width="0.95" stroke-linecap="round" stroke-linejoin="round"><path d="M6 0.6V7.6M3.4 5L6 7.6L8.6 5"/><path d="M0.6 6.4V8.9Q0.6 9.6 1.3 9.6H10.7Q11.4 9.6 11.4 8.9V6.4"/></svg></div><span class="cell" style="left:287px">20220802-1410-spitzbergen-contact3.mp3</span><span class="cell" style="left:1240px">Abstract</span><span class="cell" style="left:1675px">0:02:49</span></div>
<div class="row" style="top:908px"><div class="btn" style="left:6px"><svg class="a" style="left:7px;top:6px" width="11" height="11" viewBox="0 0 16 16" fill="#fff"><path d="M11 1.5v1h3.5a.5.5 0 0 1 0 1h-.538l-.853 10.66A2 2 0 0 1 11.115 16h-6.23a2 2 0 0 1-1.994-1.84L2.038 3.5H1.5a.5.5 0 0 1 0-1H5v-1A1.5 1.5 0 0 1 6.5 0h3A1.5 1.5 0 0 1 11 1.5m-5 0v1h4v-1a.5.5 0 0 0-.5-.5h-3a.5.5 0 0 0-.5.5M4.5 5.029l.5 8.5a.5.5 0 1 0 .998-.06l-.5-8.5a.5.5 0 1 0-.998.06m6.53-.528a.5.5 0 0 0-.528.47l-.5 8.5a.5.5 0 0 0 .998.058l.5-8.5a.5.5 0 0 0-.47-.528M8 4.5a.5.5 0 0 0-.5.5v8.5a.5.5 0 0 0 1 0V5a.5.5 0 0 0-.5-.5"/></svg></div><div class="btn" style="left:45px"><svg class="a" style="left:6px;top:6px" width="12" height="11" viewBox="0 0 12 11" fill="none" stroke="#e6e6e6" stroke-width="0.95" stroke-linecap="round" stroke-linejoin="round"><path d="M6 0.6V7.6M3.4 5L6 7.6L8.6 5"/><path d="M0.6 6.4V8.9Q0.6 9.6 1.3 9.6H10.7Q11.4 9.6 11.4 8.9V6.4"/></svg></div><span class="cell" style="left:287px">20221217-0910-spitzbergen-box1.mp3</span><span class="cell" style="left:1240px">Abstract</span><span class="cell" style="left:1675px">0:00:05</span></div>
<div class="row" style="top:946px"><div class="btn" style="left:6px"><svg class="a" style="left:7px;top:6px" width="11" height="11" viewBox="0 0 16 16" fill="#fff"><path d="M11 1.5v1h3.5a.5.5 0 0 1 0 1h-.538l-.853 10.66A2 2 0 0 1 11.115 16h-6.23a2 2 0 0 1-1.994-1.84L2.038 3.5H1.5a.5.5 0 0 1 0-1H5v-1A1.5 1.5 0 0 1 6.5 0h3A1.5 1.5 0 0 1 11 1.5m-5 0v1h4v-1a.5.5 0 0 0-.5-.5h-3a.5.5 0 0 0-.5.5M4.5 5.029l.5 8.5a.5.5 0 1 0 .998-.06l-.5-8.5a.5.5 0 1 0-.998.06m6.53-.528a.5.5 0 0 0-.528.47l-.5 8.5a.5.5 0 0 0 .998.058l.5-8.5a.5.5 0 0 0-.47-.528M8 4.5a.5.5 0 0 0-.5.5v8.5a.5.5 0 0 0 1 0V5a.5.5 0 0 0-.5-.5"/></svg></div><div class="btn" style="left:45px"><svg class="a" style="left:6px;top:6px" width="12" height="11" viewBox="0 0 12 11" fill="none" stroke="#e6e6e6" stroke-width="0.95" stroke-linecap="round" stroke-linejoin="round"><path d="M6 0.6V7.6M3.4 5L6 7.6L8.6 5"/><path d="M0.6 6.4V8.9Q0.6 9.6 1.3 9.6H10.7Q11.4 9.6 11.4 8.9V6.4"/></svg></div><span class="cell" style="left:287px">Satisfaction</span><span class="cell" style="left:722px">Oto</span><span class="cell" style="left:894px">Anyway</span><span class="cell" style="left:1675px">0:04:59</span></div>
<div class="row" style="top:984px"><div class="btn" style="left:6px"><svg class="a" style="left:7px;top:6px" width="11" height="11" viewBox="0 0 16 16" fill="#fff"><path d="M11 1.5v1h3.5a.5.5 0 0 1 0 1h-.538l-.853 10.66A2 2 0 0 1 11.115 16h-6.23a2 2 0 0 1-1.994-1.84L2.038 3.5H1.5a.5.5 0 0 1 0-1H5v-1A1.5 1.5 0 0 1 6.5 0h3A1.5 1.5 0 0 1 11 1.5m-5 0v1h4v-1a.5.5 0 0 0-.5-.5h-3a.5.5 0 0 0-.5.5M4.5 5.029l.5 8.5a.5.5 0 1 0 .998-.06l-.5-8.5a.5.5 0 1 0-.998.06m6.53-.528a.5.5 0 0 0-.528.47l-.5 8.5a.5.5 0 0 0 .998.058l.5-8.5a.5.5 0 0 0-.47-.528M8 4.5a.5.5 0 0 0-.5.5v8.5a.5.5 0 0 0 1 0V5a.5.5 0 0 0-.5-.5"/></svg></div><div class="btn" style="left:45px"><svg class="a" style="left:6px;top:6px" width="12" height="11" viewBox="0 0 12 11" fill="none" stroke="#e6e6e6" stroke-width="0.95" stroke-linecap="round" stroke-linejoin="round"><path d="M6 0.6V7.6M3.4 5L6 7.6L8.6 5"/><path d="M0.6 6.4V8.9Q0.6 9.6 1.3 9.6H10.7Q11.4 9.6 11.4 8.9V6.4"/></svg></div><span class="cell" style="left:287px">Away</span><span class="cell" style="left:722px">Oto</span><span class="cell" style="left:894px">Anyway</span><span class="cell" style="left:1675px">0:03:36</span></div>
<div class="row" style="top:1022px"><div class="btn" style="left:6px"><svg class="a" style="left:7px;top:6px" width="11" height="11" viewBox="0 0 16 16" fill="#fff"><path d="M11 1.5v1h3.5a.5.5 0 0 1 0 1h-.538l-.853 10.66A2 2 0 0 1 11.115 16h-6.23a2 2 0 0 1-1.994-1.84L2.038 3.5H1.5a.5.5 0 0 1 0-1H5v-1A1.5 1.5 0 0 1 6.5 0h3A1.5 1.5 0 0 1 11 1.5m-5 0v1h4v-1a.5.5 0 0 0-.5-.5h-3a.5.5 0 0 0-.5.5M4.5 5.029l.5 8.5a.5.5 0 1 0 .998-.06l-.5-8.5a.5.5 0 1 0-.998.06m6.53-.528a.5.5 0 0 0-.528.47l-.5 8.5a.5.5 0 0 0 .998.058l.5-8.5a.5.5 0 0 0-.47-.528M8 4.5a.5.5 0 0 0-.5.5v8.5a.5.5 0 0 0 1 0V5a.5.5 0 0 0-.5-.5"/></svg></div><div class="btn" style="left:45px"><svg class="a" style="left:6px;top:6px" width="12" height="11" viewBox="0 0 12 11" fill="none" stroke="#e6e6e6" stroke-width="0.95" stroke-linecap="round" stroke-linejoin="round"><path d="M6 0.6V7.6M3.4 5L6 7.6L8.6 5"/><path d="M0.6 6.4V8.9Q0.6 9.6 1.3 9.6H10.7Q11.4 9.6 11.4 8.9V6.4"/></svg></div><span class="cell" style="left:287px">algorythm</span><span class="cell" style="left:722px">hÄK</span><span class="cell" style="left:894px">TheAlgorythm</span><span class="cell" style="left:1240px">electronic/experimental</span><span class="cell" style="left:1675px">0:03:18</span></div>

<!-- scrollbar -->
<div class="a" style="left:1908px;top:458px;width:12px;height:601px;background:#0c0c0c"></div>
<div class="a" style="left:1911px;top:461px;width:6px;height:455px;border-radius:3px;background:#8f8f8f"></div>

<!-- footer -->
<div class="a" style="left:0;top:1059px;width:1920px;height:1px;background:#666"></div>
<div class="a" style="left:0;top:1060px;width:1920px;height:18px;background:#000"></div>
<div class="ft" style="left:197px">Internet : OK</div>
<div class="ft" style="left:653px;letter-spacing:-0.22px">Free Space : 21996 Mo</div>
<div class="ft" style="left:1166px;letter-spacing:-0.4px">CPU : 23.5 %</div>
<div class="ft" style="left:1648px;letter-spacing:-0.1px">Connected : 2</div>
<div class="a" style="left:0;top:1078px;width:960px;height:2px;background:#fff"></div>
</body></html>
